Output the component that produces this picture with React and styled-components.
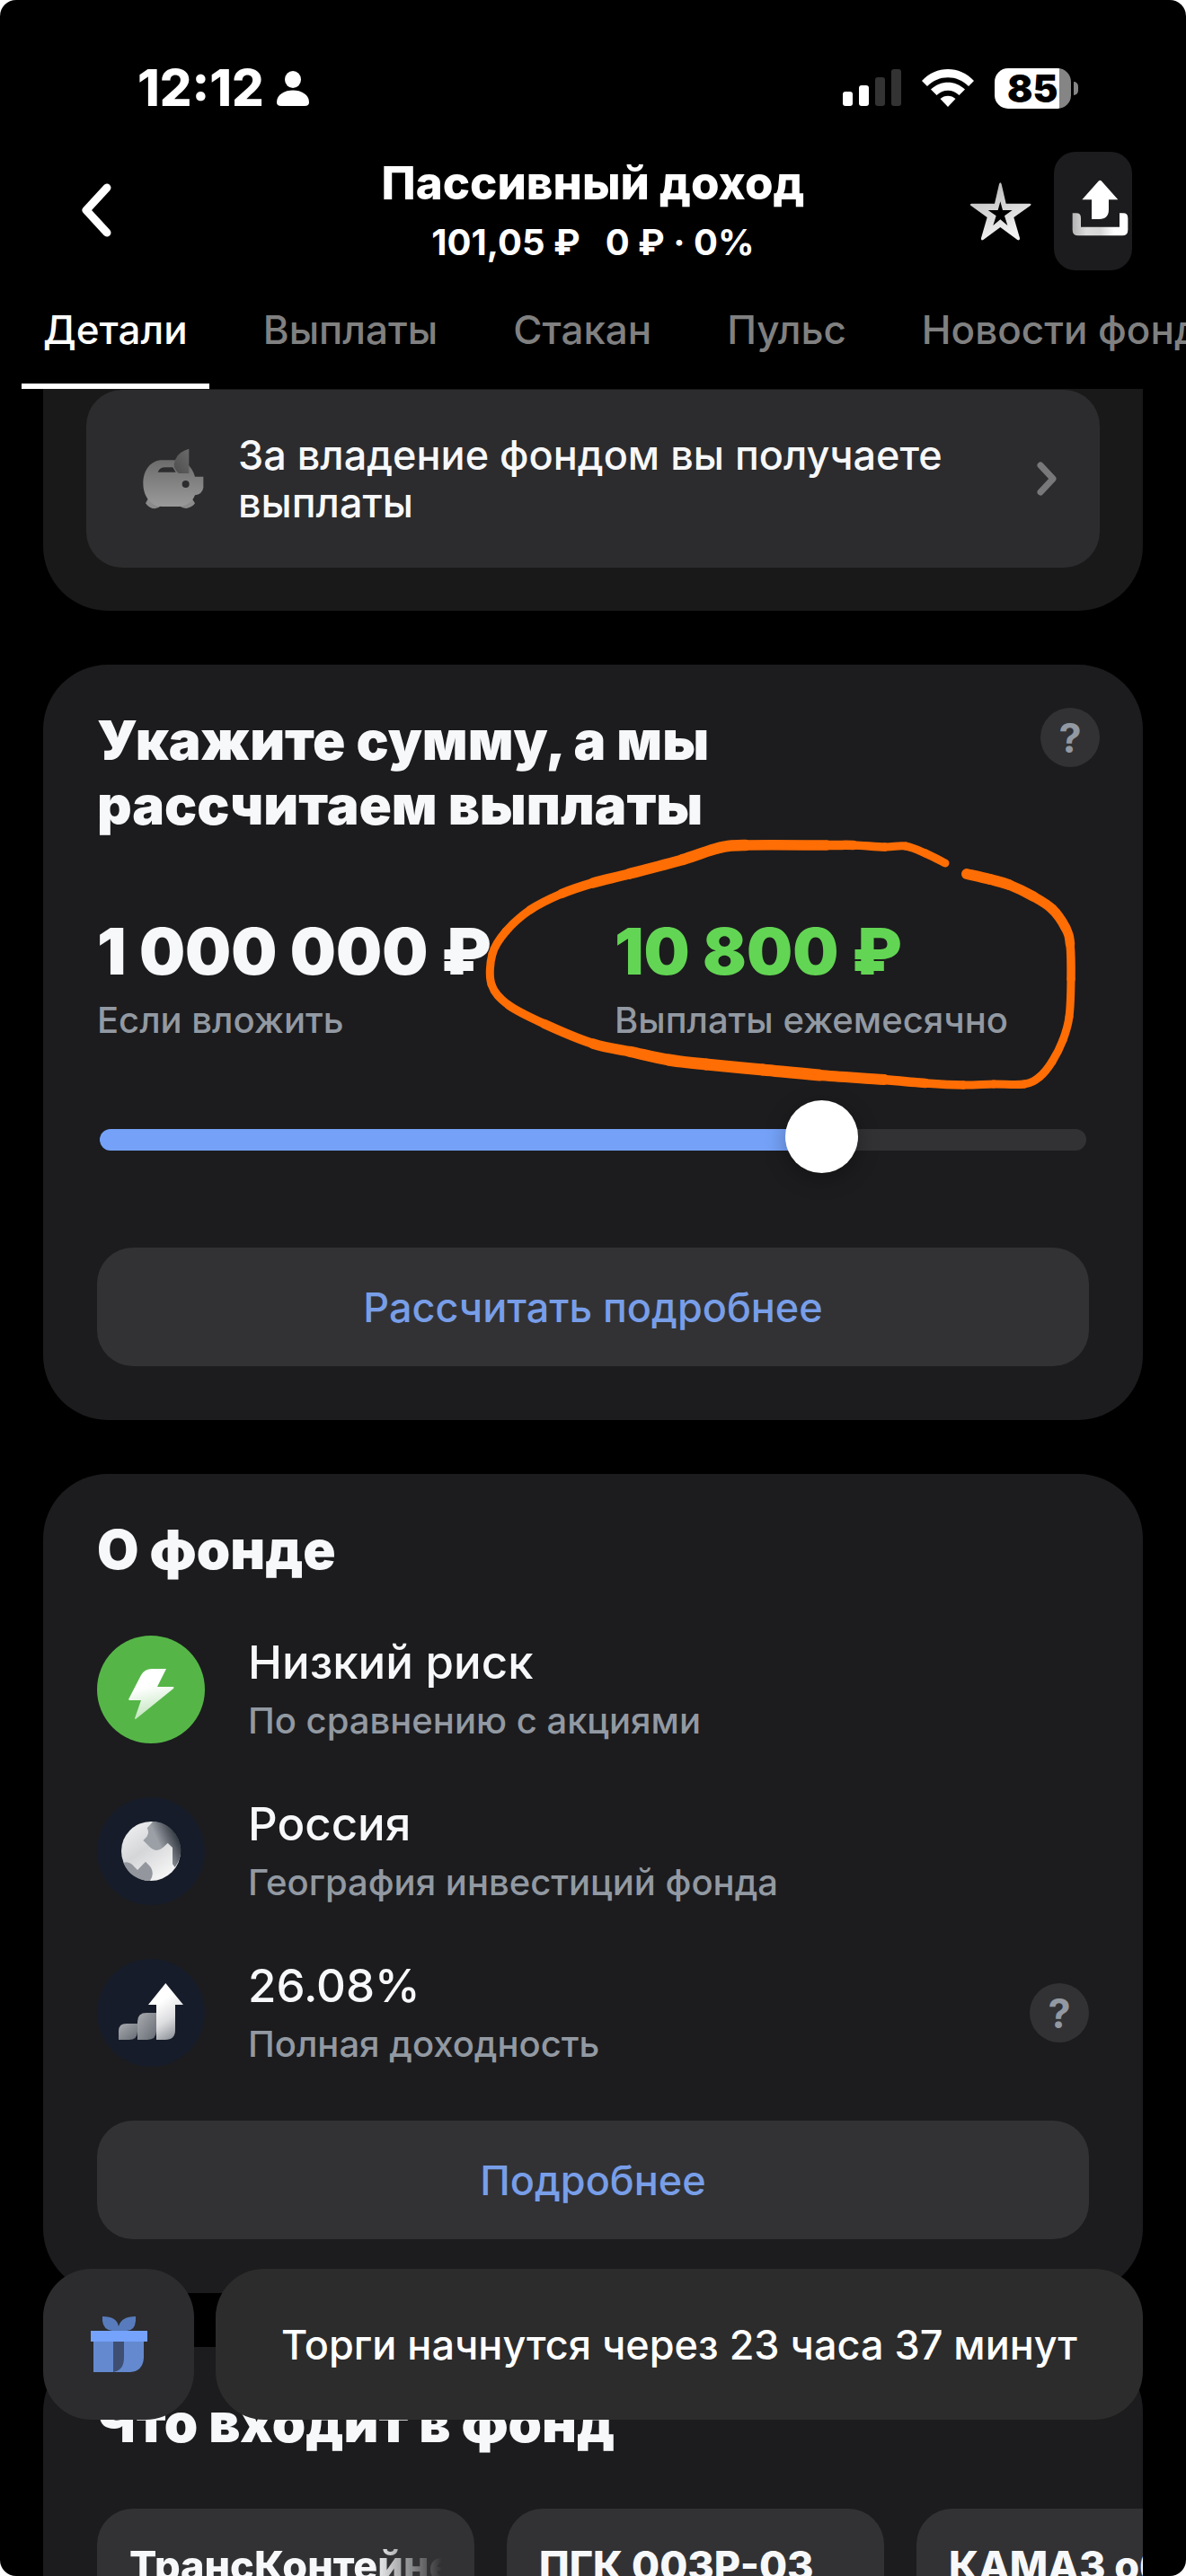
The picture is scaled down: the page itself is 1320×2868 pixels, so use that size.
import { useState } from "react";
import styled, { createGlobalStyle } from "styled-components";

const tabs = ["Детали", "Выплаты", "Стакан", "Пульс", "Новости фонда"];
const bonds = [
  { name: "ТрансКонтейнер", long: true },
  { name: "ПГК 003Р-03" },
  { name: "КАМАЗ об. 15" },
];

// x, y, pen width
const markPoints = [
  [1052, 961, 9],
  [1030, 950, 9],
  [1008, 942, 9],
  [985, 943, 9],
  [950, 941, 10],
  [920, 941, 11],
  [830, 941, 12],
  [800, 944, 13],
  [760, 957, 12],
  [700, 973, 12],
  [660, 983, 11],
  [625, 995, 10],
  [590, 1013, 9],
  [563, 1037, 9],
  [548, 1062, 9],
  [547, 1096, 9],
  [566, 1119, 9],
  [606, 1140, 10],
  [660, 1162, 11],
  [702, 1171, 12],
  [744, 1180, 13],
  [786, 1185, 13],
  [849, 1191, 13],
  [912, 1197, 13],
  [984, 1202, 11],
  [1030, 1206, 10],
  [1072, 1208, 9],
  [1106, 1207, 9],
  [1140, 1207, 9],
  [1157, 1199, 9],
  [1171, 1182, 9],
  [1183, 1158, 9],
  [1190, 1132, 9],
  [1192, 1090, 9],
  [1191, 1051, 10],
  [1186, 1033, 11],
  [1171, 1012, 11],
  [1150, 998, 11],
  [1123, 985, 12],
  [1102, 979, 12],
  [1076, 973, 12],
];

const HandMark = () => {
  const at = (i) => markPoints[Math.max(0, Math.min(markPoints.length - 1, i))];
  return (
    <Mark viewBox="532 928 672 290" width="672" height="290" aria-hidden="true">
      {markPoints.slice(1).map((p2, i) => {
        const p0 = at(i - 1);
        const p1 = at(i);
        const p3 = at(i + 2);
        const c1 = [p1[0] + (p2[0] - p0[0]) / 6, p1[1] + (p2[1] - p0[1]) / 6];
        const c2 = [p2[0] - (p3[0] - p1[0]) / 6, p2[1] - (p3[1] - p1[1]) / 6];
        return (
          <path
            key={i}
            d={`M${p1[0]} ${p1[1]}C${c1[0]} ${c1[1]} ${c2[0]} ${c2[1]} ${p2[0]} ${p2[1]}`}
            strokeWidth={(p1[2] + p2[2]) / 2}
          />
        );
      })}
    </Mark>
  );
};

const StatusIcons = () => (
  <>
    <svg width="65" height="42" viewBox="0 0 65 42" fill="#fff">
      <rect x="0" y="25" width="11" height="16" rx="3" />
      <rect x="18" y="18" width="11" height="23" rx="3" />
      <rect x="36" y="9" width="11" height="32" rx="3" fill="#333" />
      <rect x="54" y="0" width="11" height="41" rx="3" fill="#333" />
    </svg>
    <svg width="58" height="42" viewBox="0 0 58 42" fill="#fff">
      <path d="M0 13C16-4.300 42-4.300 58 13L52 19C39 6 19 6 6 19Z" />
      <path d="M10 22.500C21 12 37 12 48 22.500L41.500 29C34 22 24 22 16.500 29Z" />
      <path d="M20.500 33C25 28.500 33 28.500 37.500 33L29 42Z" />
    </svg>
  </>
);

const BackIcon = () => (
  <svg width="36" height="62" viewBox="0 0 36 62" fill="none">
    <path
      d="M31 5L8 30L31 55"
      stroke="#fff"
      strokeWidth="9"
      strokeLinecap="round"
      strokeLinejoin="round"
    />
  </svg>
);

const StarIcon = () => (
  <svg width="68" height="65" viewBox="60 424 204 195">
    <defs>
      <linearGradient id="star" x1="0" y1="0" x2="0.4" y2="1">
        <stop offset="0" stopColor="#b4b4b4" />
        <stop offset="1" stopColor="#f2f2f2" />
      </linearGradient>
    </defs>
    <path
      fill="url(#star)"
      fillRule="evenodd"
      d="M156 430Q160 420 164 430L179 495L258 495Q266 496 260 502L205 541L225 610Q226 620 217 616L160 574L103 616Q95 620 96 610L116 541L62 502Q56 496 64 495L141 495ZM160 488L152 517H119L146 536L136 568L160 548L184 568L174 536L200 517H168Z"
    />
  </svg>
);

const ShareIcon = () => (
  <svg width="87" height="132" viewBox="339 327 261 396">
    <defs>
      <linearGradient id="tray" x1="0" y1="0" x2="1" y2="0">
        <stop offset="0" stopColor="#b4b4b4" />
        <stop offset="0.25" stopColor="#dcdcdc" />
        <stop offset="0.5" stopColor="#d6d6d6" />
        <stop offset="0.75" stopColor="#fff" />
      </linearGradient>
    </defs>
    <path
      fill="url(#tray)"
      d="M401 532H414Q429 532 429 548V578H558V532H570Q586 532 586 548V588Q586 607 567 607H420Q401 607 401 588Z"
    />
    <path
      fill="#fff"
      d="M489 424Q493 420 497 424L553 487H522V520Q522 552 490 552H465V487H433Z"
    />
  </svg>
);

const PiggyIcon = () => (
  <svg width="68" height="68" viewBox="38 34 204 204">
    <defs>
      <linearGradient id="pig" x1="0" y1="0" x2="0" y2="1">
        <stop offset="0" stopColor="#6c6c6d" />
        <stop offset="1" stopColor="#9a9a9a" />
      </linearGradient>
      <linearGradient id="ear" x1="1" y1="0" x2="0.2" y2="1">
        <stop offset="0" stopColor="#6a6a6b" />
        <stop offset="1" stopColor="#505051" />
      </linearGradient>
    </defs>
    <path
      fill="#8b8b8b"
      d="M56 202L47 218Q60 236 78 236Q92 234 98 226L160 226Q170 236 184 235Q204 231 212 218L202 202Z"
    />
    <path
      fill="url(#pig)"
      fillRule="evenodd"
      d="M102 74H145C175 74 202 92 212 129H240V166Q236 188 212 191C204 214 180 229 158 229H102C66 229 39 196 39 151C39 106 66 74 102 74ZM88 114H148L138 98H112Q94 98 88 114ZM181 142A12 12 0 1 0 181 166A12 12 0 1 0 181 142Z"
    />
    <path fill="url(#ear)" d="M192 36V118H158Q142 105 142 88Q148 48 192 36Z" />
  </svg>
);

const ChevronIcon = () => (
  <svg width="22" height="44" viewBox="0 0 22 44" fill="none">
    <path
      d="M4 7L18 22L4 37"
      stroke="#78787b"
      strokeWidth="7"
      strokeLinecap="round"
      strokeLinejoin="round"
    />
  </svg>
);

const BoltIcon = () => (
  <svg viewBox="0 0 120 120">
    <defs>
      <linearGradient id="bolt" x1="0.4" y1="0" x2="0.6" y2="1">
        <stop offset="0.35" stopColor="#fff" />
        <stop offset="1" stopColor="#b9e2b4" />
      </linearGradient>
    </defs>
    <path
      fill="url(#bolt)"
      d="M35 71L49 44Q53 37 61 37H77L67 57H85Q86 58 85 59L43 93Q42 93 42 92L49 72H36Z"
    />
  </svg>
);

const GlobeIcon = () => (
  <svg viewBox="0 3 360 360">
    <defs>
      <linearGradient id="sea" x1="0.4" y1="0.45" x2="0.85" y2="0.2">
        <stop offset="0" stopColor="#9b9fa6" />
        <stop offset="1" stopColor="#30363f" />
      </linearGradient>
      <linearGradient id="land" x1="0" y1="0" x2="0.7" y2="1">
        <stop offset="0" stopColor="#f4f4f5" />
        <stop offset="0.5" stopColor="#d5d6d8" />
        <stop offset="1" stopColor="#f7f7f7" />
      </linearGradient>
    </defs>
    <circle cx="180" cy="183" r="99" fill="url(#land)" />
    <path
      fill="url(#sea)"
      d="M187 84L167 106Q176 120 166 135L154 147L175 168Q198 191 220 171L236 156L252 171V226L260 237C292 195 283 145 251 113C234 95 212 84 187 84Z"
    />
    <path
      fill="#93979d"
      d="M88 221Q105 216 117 227L135 246L162 218L179 236Q193 257 177 282C138 282 103 260 88 221Z"
    />
  </svg>
);

const GrowthIcon = () => (
  <svg viewBox="0 543 360 360">
    <defs>
      <linearGradient id="arrow" x1="0.3" y1="0" x2="0.7" y2="1">
        <stop offset="0.3" stopColor="#fff" />
        <stop offset="0.65" stopColor="#dcdddf" />
        <stop offset="1" stopColor="#8c9097" />
      </linearGradient>
      <linearGradient id="steps" x1="0" y1="0" x2="1" y2="1">
        <stop offset="0" stopColor="#a9acb0" />
        <stop offset="1" stopColor="#666b74" />
      </linearGradient>
    </defs>
    <path
      fill="url(#steps)"
      d="M72 813V784Q72 759 98 759H135V785Q135 813 106 813Z"
    />
    <path
      fill="url(#steps)"
      d="M135 813V752Q135 723 165 723H198V784Q198 813 168 813Z"
    />
    <path
      fill="url(#arrow)"
      d="M229 624L288 696H261V780Q261 813 228 813H198V696H171Z"
    />
  </svg>
);

const GiftIcon = () => (
  <svg width="63" height="63" viewBox="0 0 63 63">
    <path
      fill="#587bbd"
      d="M13 0Q29 0 31 11Q34 0 50 0V5Q49 16 40 16H24Q14 15 13 5Z"
    />
    <path fill="#6489cf" d="M3 28H59V46Q58 61 44 62H3Z" />
    <path fill="#3f4f72" d="M25 28H37V46Q37 60 25 62Z" />
    <path fill="#75a2fa" d="M0 16H63V28H0Z" />
  </svg>
);

const facts = [
  { title: "Низкий риск", note: "По сравнению с акциями", icon: BoltIcon, bg: "#55b647" },
  { title: "Россия", note: "География инвестиций фонда", icon: GlobeIcon, bg: "#161c29" },
  { title: "26.08%", note: "Полная доходность", icon: GrowthIcon, bg: "#161c29", help: true },
];

const App = () => {
  const [tab, setTab] = useState("Детали");
  const [amount, setAmount] = useState(75);
  return (
    <>
      <GlobalStyle />
      <Screen>
        <StatusBar>
          <Clock>
            12:12
            <svg width="36" height="39" viewBox="0 0 36 39" fill="#fff">
              <ellipse cx="18" cy="9.500" rx="9" ry="9.500" />
              <path d="M0 35C0 17 36 17 36 35Q36 39 31 39H5Q0 39 0 35Z" />
            </svg>
          </Clock>
          <Indicators>
            <StatusIcons />
            <Battery>
              <BatteryLevel>85</BatteryLevel>
            </Battery>
          </Indicators>
        </StatusBar>
        <Header>
          <BackButton type="button" aria-label="Назад">
            <BackIcon />
          </BackButton>
          <Heading>
            <h1>Пассивный доход</h1>
            <Price>
              <span>101,05 ₽</span>
              <span>0 ₽ · 0%</span>
            </Price>
          </Heading>
          <Actions>
            <IconButton type="button" aria-label="В избранное">
              <StarIcon />
            </IconButton>
            <ShareButton type="button" aria-label="Поделиться">
              <ShareIcon />
            </ShareButton>
          </Actions>
        </Header>
        <Tabs>
          {tabs.map((name) => (
            <Tab
              key={name}
              type="button"
              $active={tab === name}
              onClick={() => setTab(name)}
            >
              {name}
            </Tab>
          ))}
        </Tabs>
        <Content>
          <ScrolledCard>
            <PayoutLink href="#payouts">
              <PiggyIcon />
              <span>За владение фондом вы получаете выплаты</span>
              <ChevronIcon />
            </PayoutLink>
          </ScrolledCard>
          <Card>
            <CardTop>
              <CardTitle>
                <label htmlFor="amount">Укажите сумму, а мы рассчитаем выплаты</label>
              </CardTitle>
              <Help type="button" aria-label="Подсказка о расчёте">
                ?
              </Help>
            </CardTop>
            <Results>
              <Result>
                <Sum>1 000 000 ₽</Sum>
                <Note>Если вложить</Note>
              </Result>
              <Result>
                <Sum $green>10 800 ₽</Sum>
                <Note>Выплаты ежемесячно</Note>
                <HandMark />
              </Result>
            </Results>
            <Slider
              id="amount"
              type="range"
              min="0"
              max="100"
              value={amount}
              style={{ "--fill": `${amount}%` }}
              onChange={(e) => setAmount(Number(e.target.value))}
            />
            <WideButton type="button">Рассчитать подробнее</WideButton>
          </Card>
          <Card>
            <CardTitle>О фонде</CardTitle>
            <Facts>
              {facts.map(({ title, note, icon: Icon, bg, help }) => (
                <Fact key={title}>
                  <Badge $bg={bg}>
                    <Icon />
                  </Badge>
                  <FactText>
                    <FactTitle>{title}</FactTitle>
                    <Note>{note}</Note>
                  </FactText>
                  {help && (
                    <Help type="button" aria-label="Подсказка о доходности">
                      ?
                    </Help>
                  )}
                </Fact>
              ))}
            </Facts>
            <WideButton type="button">Подробнее</WideButton>
          </Card>
          <Card>
            <CardTitle>Что входит в фонд</CardTitle>
            <Bonds>
              {bonds.map(({ name, long }) => (
                <Bond key={name}>
                  <BondName $long={long}>{name}</BondName>
                </Bond>
              ))}
            </Bonds>
          </Card>
        </Content>
        <BottomBar>
          <GiftButton type="button" aria-label="Подарок">
            <GiftIcon />
          </GiftButton>
          <TradeButton type="button">Торги начнутся через 23 часа 37 минут</TradeButton>
        </BottomBar>
      </Screen>
    </>
  );
};

const GlobalStyle = createGlobalStyle`
  * {
    box-sizing: border-box;
  }
  body {
    margin: 0;
    background: #fff;
    font-family: Inter, "Liberation Sans", sans-serif;
    color: #f7f8fa;
  }
  button {
    font-family: inherit;
    border: none;
    padding: 0;
    cursor: pointer;
  }
  h1, h2, h3, p {
    margin: 0;
  }
  svg {
    display: block;
    flex-shrink: 0;
  }
`;
const Screen = styled.div`
  display: flex;
  flex-direction: column;
  height: 100vh;
  overflow: hidden;
  border-radius: 18px;
  background: #000;
`;
const StatusBar = styled.div`
  display: flex;
  justify-content: space-between;
  align-items: center;
  padding: 66px 120px 28px 153px;
  color: #fff;
`;
const Clock = styled.div`
  display: flex;
  align-items: center;
  gap: 14px;
  font-size: 56px;
  line-height: 64px;
  font-weight: 800;
`;
const Indicators = styled.div`
  display: flex;
  align-items: center;
  gap: 23px;
`;
const Battery = styled.div`
  position: relative;
  width: 85px;
  height: 45px;
  margin-right: 8px;
  border-radius: 15px;
  background: linear-gradient(to right, #fff 85%, #858585 85%);
  &::after {
    content: "";
    position: absolute;
    top: 15px;
    right: -8px;
    width: 5px;
    height: 15px;
    border-radius: 0 5px 5px 0;
    background: #858585;
  }
`;
const BatteryLevel = styled.span`
  display: block;
  padding-left: 14px;
  font-size: 42px;
  line-height: 45px;
  font-weight: 900;
  color: #000;
`;
const Header = styled.header`
  display: grid;
  grid-template-columns: 1fr auto 1fr;
  align-items: center;
  height: 154px;
  padding: 0 60px;
`;
const IconButton = styled.button`
  justify-self: start;
  background: none;
`;
const BackButton = styled(IconButton)`
  padding: 0 28px;
`;
const Heading = styled.div`
  padding-top: 6px;
  text-align: center;
  color: #fff;
  h1 {
    font-size: 51px;
    line-height: 64px;
    font-weight: 800;
  }
`;
const Price = styled.p`
  display: flex;
  justify-content: center;
  gap: 28px;
  font-size: 40px;
  line-height: 68px;
  font-weight: 700;
`;
const Actions = styled.div`
  display: flex;
  justify-content: end;
  align-items: center;
  gap: 25px;
`;
const ShareButton = styled.button`
  border-radius: 24px;
  background: #1c1c1e;
`;
const Tabs = styled.nav`
  display: flex;
  gap: 36px;
  padding: 0 24px;
  overflow: hidden;
`;
const Tab = styled.button`
  flex-shrink: 0;
  height: 121px;
  padding: 0 24px 6px;
  border-bottom: 6px solid ${(props) => (props.$active ? "#fff" : "transparent")};
  background: none;
  font-size: 44px;
  font-weight: 500;
  color: ${(props) => (props.$active ? "#fff" : "#808080")};
`;
const Content = styled.main`
  flex: 1;
  min-height: 0;
  overflow: hidden;
  display: flex;
  flex-direction: column;
  gap: 60px;
  padding: 0 48px;
`;
const Card = styled.section`
  flex-shrink: 0;
  padding: 48px 60px 60px;
  border-radius: 72px;
  overflow: hidden;
  background: #1c1c1e;
`;
const ScrolledCard = styled(Card)`
  padding: 1px 48px 48px;
  border-radius: 0 0 72px 72px;
  background: #191919;
`;
const PayoutLink = styled.a`
  display: flex;
  align-items: center;
  gap: 38px;
  height: 198px;
  padding: 0 48px 0 63px;
  border-radius: 40px;
  background: #2c2c2e;
  color: inherit;
  text-decoration: none;
  font-size: 45px;
  line-height: 53px;
  font-weight: 500;
  span {
    flex: 1;
  }
`;
const CardTop = styled.div`
  display: flex;
  justify-content: space-between;
  align-items: start;
  margin-right: -12px;
`;
const CardTitle = styled.h2`
  max-width: 760px;
  font-size: 60px;
  line-height: 72px;
  font-weight: 900;
`;
const Help = styled.button`
  width: 66px;
  height: 66px;
  border-radius: 50%;
  background: #323234;
  font-size: 45px;
  font-weight: 700;
  color: #9299a2;
`;
const Results = styled.div`
  display: grid;
  grid-template-columns: 1fr 1fr;
  gap: 48px;
  margin-top: 85px;
`;
const Result = styled.div`
  position: relative;
`;
const Sum = styled.p`
  margin-bottom: 10px;
  font-size: 72px;
  line-height: 84px;
  font-weight: 900;
  white-space: nowrap;
  color: ${(props) => (props.$green ? "#63d554" : "inherit")};
`;
const Note = styled.p`
  font-size: 40px;
  line-height: 50px;
  font-weight: 500;
  color: #9299a2;
`;
const Mark = styled.svg`
  position: absolute;
  top: -89px;
  left: -152px;
  fill: none;
  stroke: #ff6d05;
  stroke-linecap: round;
  pointer-events: none;
`;
const Slider = styled.input`
  appearance: none;
  display: block;
  width: calc(100% - 6px);
  height: 82px;
  margin: 67px 3px 79px;
  background: none;
  cursor: pointer;
  &::-webkit-slider-runnable-track {
    height: 24px;
    border-radius: 12px;
    background: linear-gradient(
      to right,
      #75a2f8 var(--fill),
      #323234 var(--fill)
    );
  }
  &::-webkit-slider-thumb {
    appearance: none;
    width: 81px;
    height: 81px;
    margin-top: -32px;
    border-radius: 50%;
    background: #fff;
    box-shadow: 0 6px 24px rgba(0, 0, 0, 0.3);
  }
`;
const WideButton = styled.button`
  display: block;
  width: 100%;
  height: 132px;
  border-radius: 40px;
  background: #323234;
  font-size: 45px;
  font-weight: 500;
  color: #789ee8;
`;
const Facts = styled.ul`
  display: flex;
  flex-direction: column;
  gap: 60px;
  margin: 60px 0;
  padding: 0;
  list-style: none;
`;
const Fact = styled.li`
  display: flex;
  align-items: center;
  gap: 48px;
`;
const Badge = styled.div`
  flex-shrink: 0;
  width: 120px;
  height: 120px;
  border-radius: 50%;
  background: ${(props) => props.$bg};
`;
const FactText = styled.div`
  flex: 1;
`;
const FactTitle = styled.h3`
  margin-bottom: 10px;
  font-size: 51px;
  line-height: 60px;
  font-weight: 500;
`;
const Bonds = styled.div`
  display: flex;
  gap: 36px;
  margin-top: 60px;
`;
const Bond = styled.article`
  flex-shrink: 0;
  width: 420px;
  height: 300px;
  padding: 38px 36px;
  border-radius: 40px;
  background: #323234;
`;
const BondName = styled.h3`
  overflow: hidden;
  white-space: nowrap;
  font-size: 45px;
  line-height: 52px;
  font-weight: 800;
  mask-image: ${(props) =>
    props.$long ? "linear-gradient(to right, #000 78%, transparent)" : "none"};
`;
const BottomBar = styled.div`
  position: fixed;
  left: 0;
  right: 0;
  bottom: 174px;
  display: flex;
  gap: 24px;
  padding: 0 48px;
`;
const GiftButton = styled.button`
  display: grid;
  place-items: center;
  width: 168px;
  height: 168px;
  border-radius: 54px;
  background: #2c2c2e;
`;
const TradeButton = styled.button`
  flex: 1;
  border-radius: 54px;
  background: #2c2c2c;
  font-size: 45px;
  font-weight: 500;
  color: #fff;
`;

export default App;
